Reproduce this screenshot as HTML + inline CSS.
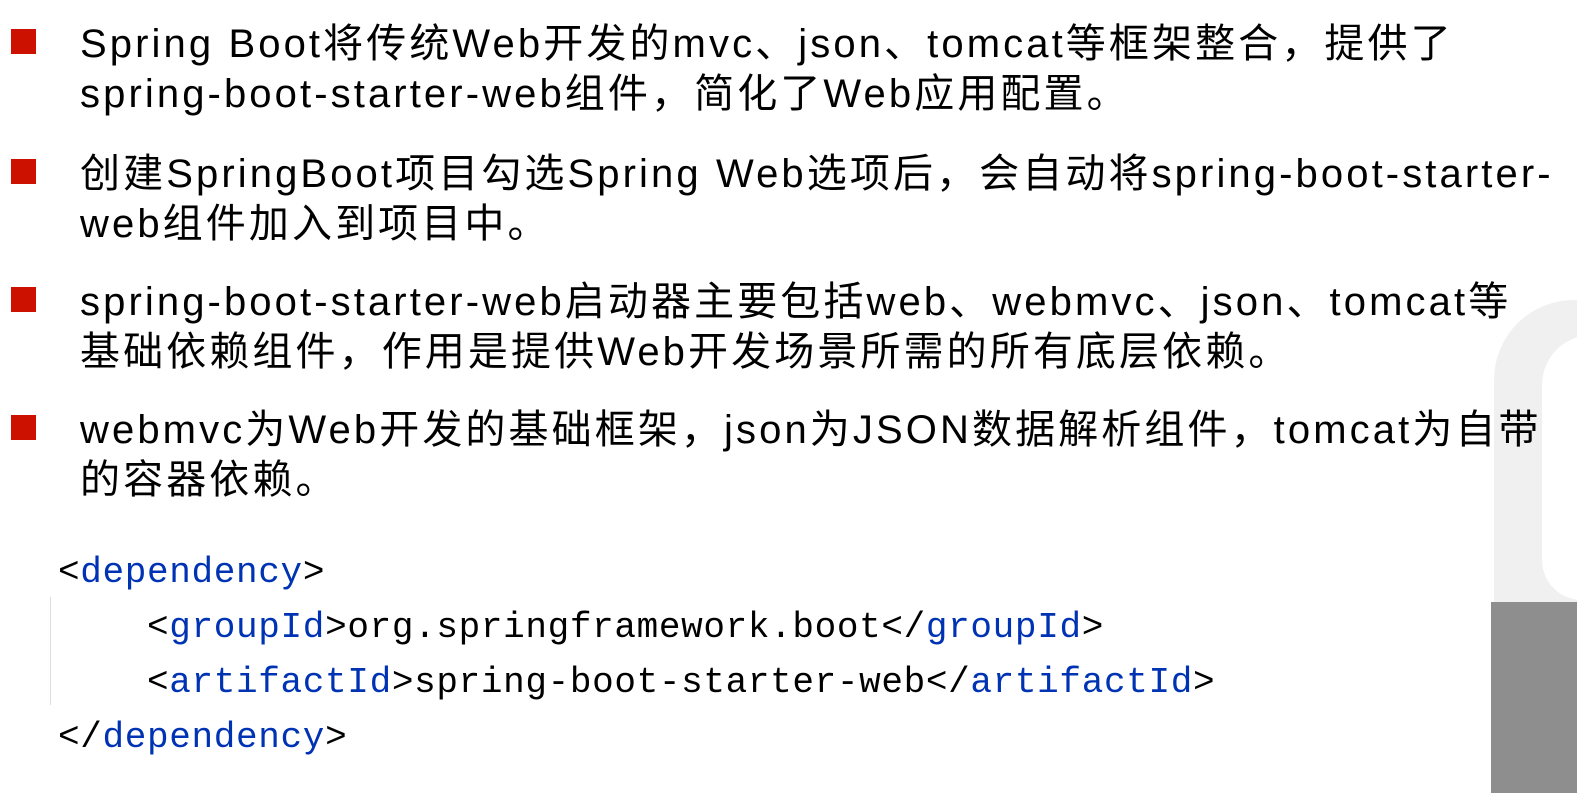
<!DOCTYPE html>
<html><head><meta charset="utf-8"><style>
html,body{margin:0;padding:0;}
body{width:1577px;height:793px;background:#fff;position:relative;overflow:hidden;font-family:"Liberation Sans","Noto Sans CJK SC",sans-serif;color:#000;}
.arch{position:absolute;left:1494px;top:300px;width:140px;height:340px;background:#f0f0f0;border-radius:80px 0 0 0;}
.arch2{position:absolute;left:1542px;top:335px;width:80px;height:265px;background:#fff;border-radius:50px 0 0 40px;}
.gray{position:absolute;left:1491px;top:602px;width:86px;height:191px;background:#8e8e8e;}
.b{position:absolute;left:11px;width:25px;height:25px;background:#cc1100;}
.p{position:absolute;left:80px;font-size:40px;line-height:50px;white-space:nowrap;letter-spacing:3.1px;}
.code{position:absolute;left:58px;font-family:"Liberation Mono",monospace;font-size:36px;line-height:55px;white-space:pre;color:#000;letter-spacing:0.65px;}
.t{color:#0033b3;}
.vl{position:absolute;left:50px;top:597px;width:1px;height:108px;background:#ddd;}
</style></head><body>
<div class="arch"></div><div class="arch2"></div><div class="gray"></div>
<div class="b" style="top:29px"></div>
<div class="p" style="top:19px">Spring Boot将传统Web开发的mvc、json、tomcat等框架整合，提供了<br>spring-boot-starter-web组件，简化了Web应用配置。</div>
<div class="b" style="top:159px"></div>
<div class="p" style="top:149px">创建SpringBoot项目勾选Spring Web选项后，会自动将spring-boot-starter-<br>web组件加入到项目中。</div>
<div class="b" style="top:287px"></div>
<div class="p" style="top:277px">spring-boot-starter-web启动器主要包括web、webmvc、json、tomcat等<br>基础依赖组件，作用是提供Web开发场景所需的所有底层依赖。</div>
<div class="b" style="top:415px"></div>
<div class="p" style="top:405px">webmvc为Web开发的基础框架，json为JSON数据解析组件，tomcat为自带<br>的容器依赖。</div>
<div class="vl"></div>
<div class="code" style="top:545px">&lt;<span class="t">dependency</span>&gt;
    &lt;<span class="t">groupId</span>&gt;org.springframework.boot&lt;/<span class="t">groupId</span>&gt;
    &lt;<span class="t">artifactId</span>&gt;spring-boot-starter-web&lt;/<span class="t">artifactId</span>&gt;
&lt;/<span class="t">dependency</span>&gt;</div>
</body></html>
